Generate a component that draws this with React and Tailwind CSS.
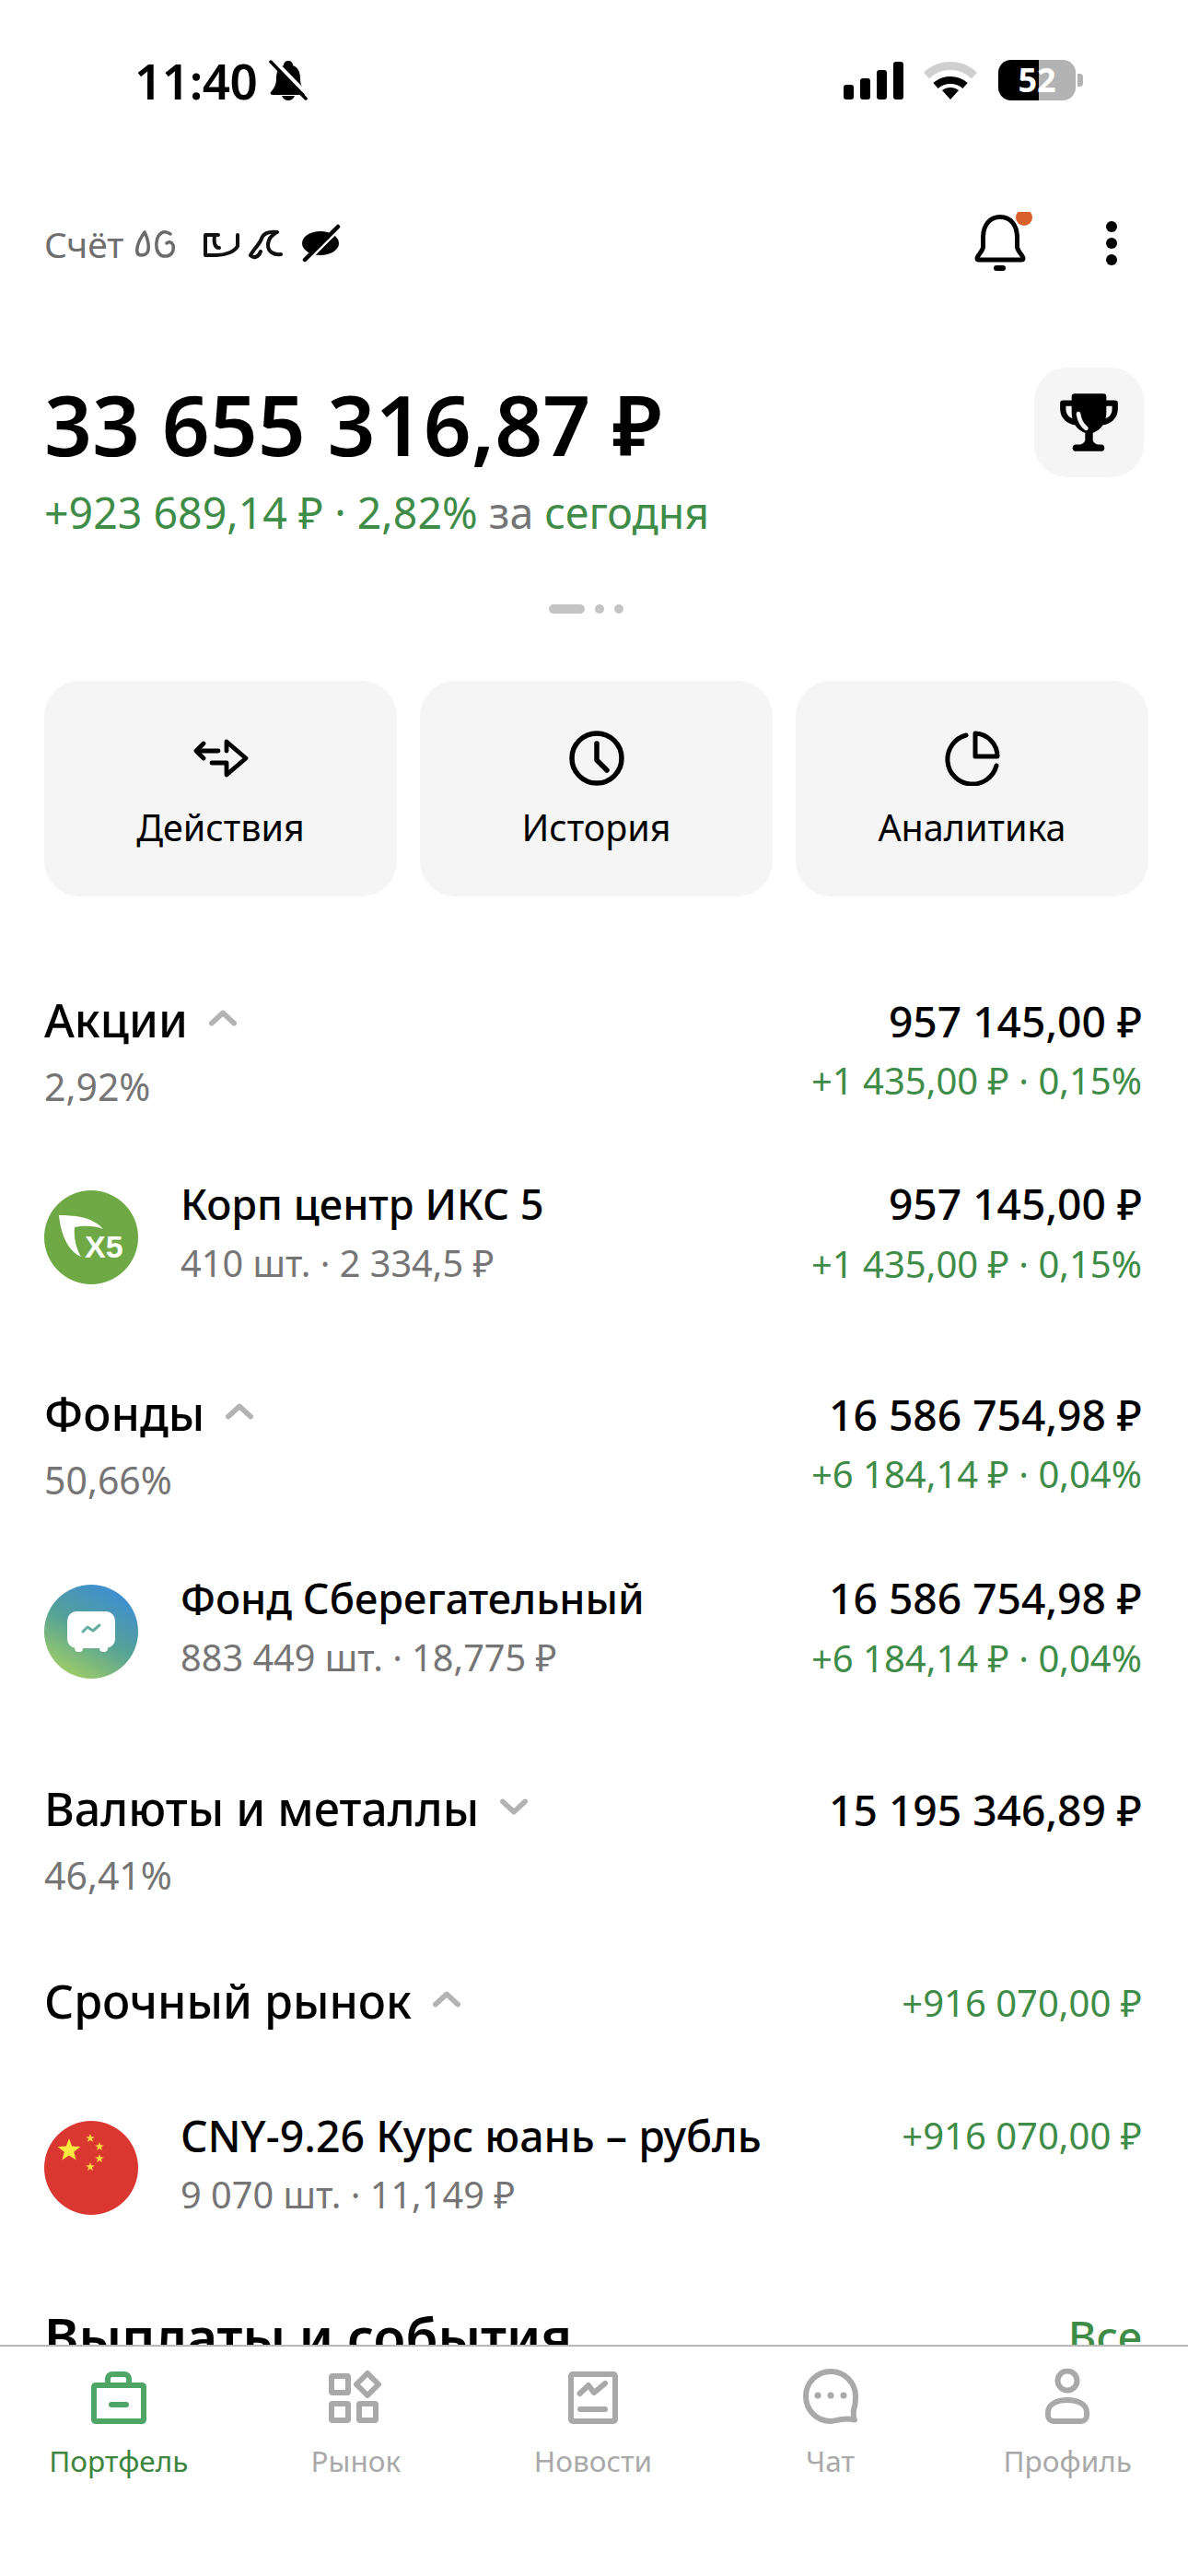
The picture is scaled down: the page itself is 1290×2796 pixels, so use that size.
import React from "react";

const star = (cx, cy, r) => {
  const pts = [];
  for (let i = 0; i < 10; i++) {
    const rr = i % 2 === 0 ? r : r * 0.42;
    const a = -Math.PI / 2 + (i * Math.PI) / 5;
    pts.push(`${(cx + rr * Math.cos(a)).toFixed(1)},${(cy + rr * Math.sin(a)).toFixed(1)}`);
  }
  return pts.join(" ");
};

function Chevron({ up = true }) {
  return (
    <svg width="30" height="20" viewBox="0 0 32 20" className="shrink-0">
      <path d={up ? "M3 16L16 4L29 16" : "M3 4L16 16L29 4"} fill="none" stroke="#b3b3b3" strokeWidth="6" strokeLinecap="round" strokeLinejoin="round" />
    </svg>
  );
}

function StatusBar() {
  return (
    <div className="h-[174px] flex items-center justify-between pl-[146px] pr-[114px]">
      <div className="flex items-center gap-[13px]">
        <span className="text-[53px] leading-none font-semibold text-black tracking-[-0.5px]">11:40</span>
        <svg width="42" height="44" viewBox="0 0 42 44">
          <path d="M21 1c3 0 5 2 5 5 6 2 8 8 8 14 0 7 2 10 6 15 1 2 0 3-2 3H4c-2 0-3-1-2-3 4-5 6-8 6-15 0-6 2-12 8-14 0-3 2-5 5-5z" fill="#000" />
          <path d="M14 39h14c-1 3-4 5-7 5s-6-2-7-5z" fill="#000" />
          <path d="M6 1L44 40" stroke="#fff" strokeWidth="4" />
          <path d="M2 2L40 42" stroke="#000" strokeWidth="3.5" strokeLinecap="round" />
        </svg>
      </div>
      <div className="flex items-center">
        <div className="flex items-end gap-[7px] h-[41px]">
          <div className="w-[11px] h-[16px] rounded-[3px] bg-black" />
          <div className="w-[11px] h-[23px] rounded-[3px] bg-black" />
          <div className="w-[11px] h-[32px] rounded-[3px] bg-black" />
          <div className="w-[11px] h-[41px] rounded-[3px] bg-black" />
        </div>
        <svg width="58" height="44" viewBox="0 0 58 44" className="ml-[22px]">
          <path d="M3 17C18 3 40 3 55 17" fill="none" stroke="#cfcfcf" strokeWidth="9" strokeLinejoin="round" />
          <path d="M13 28C22 20 36 20 45 28" fill="none" stroke="#000" strokeWidth="8" />
          <path d="M20 33C25 29 33 29 38 33L29 43Z" fill="#000" />
        </svg>
        <div className="relative ml-[23px] flex items-center">
          <div className="relative flex w-[84px] h-[44px] rounded-[14px]">
            <div className="w-[44px] bg-black rounded-l-[14px]" />
            <div className="flex-1 bg-[#b3b3b3] rounded-r-[14px]" />
            <span className="absolute inset-0 flex items-center justify-center text-[36px] font-bold text-white leading-none">52</span>
          </div>
          <div className="ml-[2px] w-[6px] h-[14px] rounded-r-[4px] bg-[#b3b3b3]" />
        </div>
      </div>
    </div>
  );
}

function AccountRow() {
  return (
    <div className="mt-[54px] h-[72px] flex items-center justify-between pl-[48px] pr-[77px]">
      <div className="flex items-center gap-[11px]">
        <span className="text-[39px] leading-none text-[#6f6f6f]">Счёт</span>
        <svg width="228" height="46" viewBox="0 0 228 46" fill="none">
          <g stroke="#6b6b6b" strokeWidth="3.5" strokeLinecap="round">
            <path d="M12 11C7 18 3 27 4 33C5 37 12 37 15 33C18 27 15 17 12 11" />
            <path d="M40 13C33 8 26 12 25 22C24 32 28 38 36 37C42 36 44 31 43 25C41 21 38 21 36 23" />
          </g>
          <g stroke="#111" strokeWidth="4" strokeLinecap="round" strokeLinejoin="round">
            <path d="M78 14L78 36H90C100 36 110 32 113 26L113 14M78 14H92M88 15C87 22 88 28 93 28" />
            <path d="M127 36C130 30 137 24 139 18C141 12 147 10 156 11C150 14 146 18 146 25C146 32 152 36 160 35M127 36C130 40 136 38 138 32" />
          </g>
          <ellipse cx="203" cy="23" rx="20" ry="13" fill="#000" />
          <path d="M190 40L222 8" stroke="#fff" strokeWidth="5" />
          <path d="M186 41L222 5" stroke="#000" strokeWidth="4.5" strokeLinecap="round" />
        </svg>
      </div>
      <div className="flex items-center gap-[80px]">
        <svg width="66" height="68" viewBox="0 0 66 68" fill="none">
          <path d="M12.5 28C12.5 14 20 5.5 31 5.5C42 5.5 49.5 14 49.5 28V38C49.5 42 56 48 56 50C56 52 55 52 54 52H8C7 52 6 52 6 50C6 48 12.5 42 12.5 38Z" stroke="#000" strokeWidth="5" strokeLinejoin="round" />
          <rect x="24" y="58" width="13" height="6" rx="3" fill="#000" />
          <circle cx="57" cy="6" r="9" fill="#d9622b" />
        </svg>
        <div className="flex flex-col gap-[6px]">
          <div className="w-[12px] h-[12px] rounded-full bg-black" />
          <div className="w-[12px] h-[12px] rounded-full bg-black" />
          <div className="w-[12px] h-[12px] rounded-full bg-black" />
        </div>
      </div>
    </div>
  );
}

function Balance() {
  return (
    <div className="mt-[99px] flex items-start justify-between pl-[48px] pr-[48px]">
      <div>
        <div className="mt-[11px] text-[91px] leading-[100px] font-semibold text-black">33 655 316,87 ₽</div>
        <div className="mt-[16px] text-[46.5px] leading-[60px] text-[#3e8c47]">
          +923 689,14 ₽ · 2,82% <span className="text-[#757575]">за</span> сегодня
        </div>
      </div>
      <div className="w-[119px] h-[119px] rounded-[36px] bg-[#f5f5f5] flex items-center justify-center">
        <svg width="69" height="63" viewBox="0 0 66 60">
          <path d="M16 10H6V16C6 24 12 29 20 30M50 10H60V16C60 24 54 29 46 30" fill="none" stroke="#000" strokeWidth="6" strokeLinejoin="round" />
          <path d="M18 0H48a3 3 0 0 1 3 3V20C51 31 45 38 37 41V48C37 51 40 52 43 54H23C26 52 29 51 29 48V41C21 38 15 31 15 20V3a3 3 0 0 1 3-3z" fill="#000" />
          <rect x="16" y="53" width="33" height="7" rx="3.5" fill="#000" />
          <path d="M22 21C23 28 26 33 30 36" fill="none" stroke="#f5f5f5" strokeWidth="4.5" strokeLinecap="round" />
        </svg>
      </div>
    </div>
  );
}

function Pager() {
  return (
    <div className="mt-[70px] flex items-center justify-center gap-[11px] pr-[18px]">
      <div className="w-[39px] h-[10px] rounded-full bg-[#c4c4c4]" />
      <div className="w-[10px] h-[10px] rounded-full bg-[#c4c4c4]" />
      <div className="w-[10px] h-[10px] rounded-full bg-[#c4c4c4]" />
    </div>
  );
}

function ActionCard({ label, children }) {
  return (
    <div className="h-[234px] rounded-[38px] bg-[#f5f5f5] flex flex-col items-center pt-[54px]">
      <div className="w-[60px] h-[60px]">{children}</div>
      <div className="mt-[23px] text-[39.5px] leading-[44px] text-black">{label}</div>
    </div>
  );
}

function Actions() {
  return (
    <div className="mt-[73px] grid grid-cols-3 gap-[25px] pl-[48px] pr-[43px]">
      <ActionCard label="Действия">
        <svg width="60" height="60" viewBox="18 12 60 60" fill="none" stroke="#000" strokeWidth="4.8" strokeLinecap="round" strokeLinejoin="round">
          <path d="M45 34H22M29 26L21 34L29 42" />
          <path d="M54 34V24L75 42L54 60V47H38" />
        </svg>
      </ActionCard>
      <ActionCard label="История">
        <svg width="60" height="60" viewBox="0 0 60 60" fill="none" stroke="#000" strokeWidth="5.5" strokeLinecap="round" strokeLinejoin="round">
          <circle cx="30" cy="30" r="27" />
          <path d="M30 14V32L41 43" />
        </svg>
      </ActionCard>
      <ActionCard label="Аналитика">
        <svg width="60" height="60" viewBox="0 0 60 60" fill="none" stroke="#000" strokeWidth="5" strokeLinecap="round" strokeLinejoin="round">
          <path d="M23 5A27 27 0 1 0 56 38" />
          <path d="M33 3V28H57A25 25 0 0 0 33 3Z" />
        </svg>
      </ActionCard>
    </div>
  );
}

function GroupHeader({ title, up = true, share, value, change }) {
  return (
    <div className="flex justify-between pl-[48px] pr-[50px]">
      <div>
        <div className="flex items-center h-[56px]">
          <span className="text-[50.2px] leading-[56px] font-[480] text-black">{title}</span>
          <span className="ml-[23px] -mt-[4px]"><Chevron up={up} /></span>
        </div>
        {share && <div className="mt-[19px] text-[41px] leading-[50px] text-[#757575]">{share}</div>}
      </div>
      <div className="text-right">
        {value && <div className="mt-[2px] text-[46.2px] leading-[56px] font-[480] text-black">{value}</div>}
        {change && <div className={(value ? "mt-[11px]" : "mt-[5px]") + " text-[40px] leading-[50px] text-[#3e8c47]"}>{change}</div>}
      </div>
    </div>
  );
}

function Asset({ logo, logoClass = "mt-[13px]", title, titleClass = "text-[45.1px]", sub, value, change }) {
  return (
    <div className="flex items-start justify-between pl-[48px] pr-[50px]">
      <div className="flex items-start">
        <div className={logoClass + " w-[102px] h-[102px] shrink-0"}>{logo}</div>
        <div className="ml-[46px]">
          <div className={titleClass + " leading-[56px] font-[480] text-black"}>{title}</div>
          <div className="mt-[11px] text-[39.7px] leading-[50px] text-[#757575]">{sub}</div>
        </div>
      </div>
      <div className="text-right">
        {value && <div className="text-[46.2px] leading-[56px] font-[480] text-black">{value}</div>}
        {change && <div className={(value ? "mt-[12px]" : "mt-[3px]") + " text-[40px] leading-[50px] text-[#3e8c47]"}>{change}</div>}
      </div>
    </div>
  );
}

const X5Logo = (
  <svg width="102" height="102" viewBox="0 0 102 102">
    <circle cx="51" cy="51" r="51" fill="#6fa946" />
    <path d="M16 27C30 27 52 28 64 42C55 38 42 38 33 40C32 50 34 62 40 72C26 66 18 48 16 27Z" fill="#fff" />
    <text x="44" y="73" fontSize="34" fontWeight="700" fill="#fff" fontFamily="Liberation Sans, sans-serif">X5</text>
  </svg>
);

const FundLogo = (
  <svg width="102" height="102" viewBox="0 0 102 102">
    <defs>
      <linearGradient id="fund" x1="0.75" y1="0" x2="0.2" y2="1">
        <stop offset="0" stopColor="#3d8cd6" />
        <stop offset="0.5" stopColor="#55a297" />
        <stop offset="1" stopColor="#a6d162" />
      </linearGradient>
    </defs>
    <circle cx="51" cy="51" r="51" fill="url(#fund)" />
    <rect x="25" y="29" width="52" height="40" rx="10" fill="#fff" />
    <rect x="33" y="65" width="9" height="8" rx="4" fill="#fff" />
    <rect x="60" y="65" width="9" height="8" rx="4" fill="#fff" />
    <path d="M42 51L47 46L53 50L60 44" fill="none" stroke="#66ada4" strokeWidth="3" strokeLinecap="round" strokeLinejoin="round" />
  </svg>
);

const FlagLogo = (
  <svg width="102" height="102" viewBox="0 0 102 102">
    <circle cx="51" cy="51" r="51" fill="#d9372f" />
    <polygon points={star(27, 32, 13)} fill="#fbe93f" />
    <polygon points={star(50, 19, 5)} fill="#fbd93f" />
    <polygon points={star(60, 28, 5)} fill="#fbd93f" />
    <polygon points={star(60, 41, 5)} fill="#fbd93f" />
    <polygon points={star(50, 50, 5)} fill="#fbd93f" />
  </svg>
);

function BottomNav() {
  const G = "#a9a9a9";
  const items = [
    {
      label: "Портфель",
      active: true,
      icon: (
        <svg width="60" height="60" viewBox="0 0 60 60" fill="none" stroke="#4fa565" strokeWidth="6" strokeLinecap="round">
          <rect x="3" y="18" width="54" height="39" rx="1.5" strokeLinejoin="round" />
          <path d="M18 17V11a5 5 0 0 1 5-5H36a5 5 0 0 1 5 5V17" />
          <path d="M22 39H38" />
        </svg>
      ),
    },
    {
      label: "Рынок",
      icon: (
        <svg width="60" height="60" viewBox="0 0 60 60" fill="none" stroke={G} strokeWidth="6" strokeLinejoin="round">
          <rect x="4" y="8" width="18" height="18" rx="1" />
          <rect x="4" y="38" width="18" height="18" rx="1" />
          <rect x="34" y="38" width="18" height="18" rx="1" />
          <path d="M43 5L55 17L43 29L31 17Z" />
        </svg>
      ),
    },
    {
      label: "Новости",
      icon: (
        <svg width="60" height="60" viewBox="0 0 60 60" fill="none" stroke={G} strokeWidth="6" strokeLinecap="round" strokeLinejoin="round">
          <rect x="6" y="6" width="48" height="51" rx="2" />
          <path d="M15.5 27L25 18L31 26L43 16" />
          <path d="M16 44H43" />
        </svg>
      ),
    },
    {
      label: "Чат",
      icon: (
        <svg width="60" height="60" viewBox="0 0 60 60" fill="none">
          <path d="M30 3a27 27 0 0 0 0 54c4 0 8-1.5 12-2 4-.5 10-.5 14 .5-1.5-4-1.5-9-.5-13 1-3 1.5-8 1.5-12.5A27 27 0 0 0 30 3z" stroke={G} strokeWidth="6" strokeLinejoin="round" />
          <circle cx="16" cy="29" r="3.5" fill={G} />
          <circle cx="30" cy="29" r="3.5" fill={G} />
          <circle cx="44" cy="29" r="3.5" fill={G} />
        </svg>
      ),
    },
    {
      label: "Профиль",
      icon: (
        <svg width="60" height="60" viewBox="0 0 60 60" fill="none" stroke={G} strokeWidth="6">
          <circle cx="30" cy="13" r="10.5" />
          <path d="M9 47C9 39 18 34 30 34C42 34 51 39 51 47V51a6 6 0 0 1-6 6H15a6 6 0 0 1-6-6Z" />
        </svg>
      ),
    },
  ];
  return (
    <div className="h-[251px] shrink-0 border-t-2 border-[#b8b8b8] bg-white grid grid-cols-5 pt-[24px] pr-[2px]">
      {items.map((it) => (
        <div key={it.label} className="flex flex-col items-center">
          {it.icon}
          <div className={"mt-[20px] text-[31.5px] leading-[40px] " + (it.active ? "text-[#3e8540]" : "text-[#a9a9a9]")}>{it.label}</div>
        </div>
      ))}
    </div>
  );
}

export default function App() {
  return (
    <div className="w-[1290px] h-[2796px] bg-white flex flex-col overflow-hidden font-['Noto_Sans',sans-serif]">
      <div className="flex-1 min-h-0 overflow-hidden">
        <StatusBar />
        <AccountRow />
        <Balance />
        <Pager />
        <Actions />
        <div className="mt-[106px]">
          <GroupHeader title="Акции" share="2,92%" value="957 145,00 ₽" change="+1 435,00 ₽ · 0,15%" />
          <div className="mt-[75px]">
            <Asset logo={X5Logo} title="Корп центр ИКС 5" sub="410 шт. · 2 334,5 ₽" value="957 145,00 ₽" change="+1 435,00 ₽ · 0,15%" />
          </div>
          <div className="mt-[109px]">
            <GroupHeader title="Фонды" share="50,66%" value="16 586 754,98 ₽" change="+6 184,14 ₽ · 0,04%" />
          </div>
          <div className="mt-[76px]">
            <Asset logo={FundLogo} title="Фонд Сберегательный" sub="883 449 шт. · 18,775 ₽" value="16 586 754,98 ₽" change="+6 184,14 ₽ · 0,04%" />
          </div>
          <div className="mt-[110px]">
            <GroupHeader title="Валюты и металлы" up={false} share="46,41%" value="15 195 346,89 ₽" />
          </div>
          <div className="mt-[84px]">
            <GroupHeader title="Срочный рынок" change="+916 070,00 ₽" />
          </div>
          <div className="mt-[90px]">
            <Asset logo={FlagLogo} logoClass="mt-[12px]" titleClass="text-[46.5px]" title="CNY-9.26 Курс юань – рубль" sub="9 070 шт. · 11,149 ₽" change="+916 070,00 ₽" />
          </div>
          <div className="mt-[101px] flex justify-between pl-[48px] pr-[50px]">
            <span className="text-[57px] leading-[56px] font-semibold text-black">Выплаты и события</span>
            <span className="text-[47px] leading-[56px] font-medium text-[#3e8c47]">Все</span>
          </div>
        </div>
      </div>
      <BottomNav />
    </div>
  );
}
